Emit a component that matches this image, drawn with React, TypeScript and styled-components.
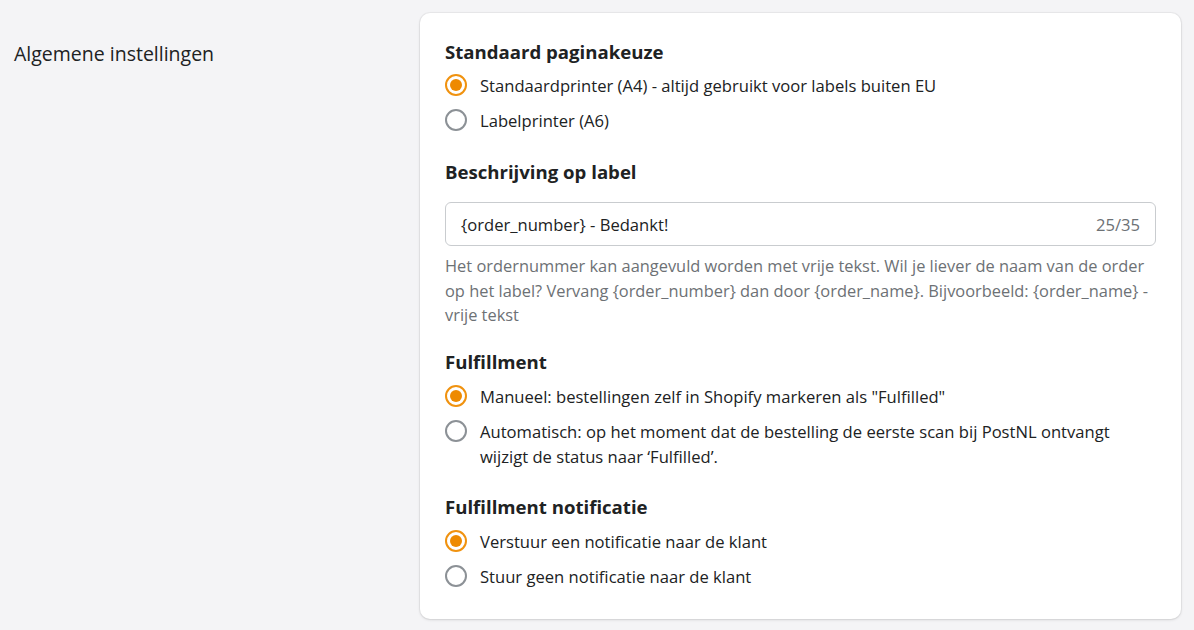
import React from "react";
import styled, { createGlobalStyle } from "styled-components";

const Global = createGlobalStyle`
  html, body { margin: 0; padding: 0; background: #f4f4f6; }
  body { font-family: "Open Sans", "Noto Sans", sans-serif; color: #202223; }
  * { box-sizing: border-box; }
`;

const Page = styled.div`
  display: flex;
  align-items: flex-start;
  padding: 13px 13px 12px 14px;
  min-height: 630px;
`;

const SideLabel = styled.div`
  width: 406px;
  flex: none;
  padding-top: 28px;
  font-size: 19.5px;
  line-height: 26px;
  color: #202223;
`;

const Card = styled.div`
  width: 761px;
  background: #fff;
  border-radius: 10px;
  box-shadow: 0 0 0 1px rgba(0, 0, 0, 0.04), 0 1px 3px rgba(0, 0, 0, 0.12);
  padding: 27px 25px 30px 25px;
  display: flex;
  flex-direction: column;
`;

const Section = styled.div<{ $gap?: number }>`
  display: flex;
  flex-direction: column;
  margin-top: ${(p) => p.$gap ?? 0}px;
`;

const Heading = styled.div<{ $mb?: number }>`
  font-size: 18.6px;
  font-weight: 700;
  line-height: 24px;
  margin-bottom: ${(p) => p.$mb ?? 10}px;
`;

const RadioList = styled.div`
  display: flex;
  flex-direction: column;
  gap: 10px;
`;

const RadioRow = styled.label`
  display: flex;
  align-items: flex-start;
  gap: 13px;
  font-size: 16.6px;
  line-height: 25px;
  color: #202223;
  cursor: pointer;
`;

const Circle = styled.span<{ $checked: boolean }>`
  flex: none;
  width: 22px;
  height: 22px;
  margin-top: 1px;
  border-radius: 50%;
  border: 2px solid ${(p) => (p.$checked ? "#f0920f" : "#8c9196")};
  display: flex;
  align-items: center;
  justify-content: center;
  &::after {
    content: "";
    width: 12px;
    height: 12px;
    border-radius: 50%;
    background: ${(p) => (p.$checked ? "#ee8a00" : "transparent")};
  }
`;

const InputBox = styled.div`
  display: flex;
  align-items: center;
  justify-content: space-between;
  height: 44px;
  border: 1px solid #c9cccf;
  border-radius: 6px;
  padding: 0 15px;
  font-size: 16.6px;
  color: #202223;
`;

const Counter = styled.span`
  color: #6d7175;
`;

const Help = styled.p`
  margin: 8px 0 0;
  font-size: 16.4px;
  line-height: 24.5px;
  color: #6d7175;
`;

const helpText =
  "Het ordernummer kan aangevuld worden met vrije tekst. Wil je liever de naam van de order op het label? Vervang {order_number} dan door {order_name}. Bijvoorbeeld: {order_name}\u00a0- vrije tekst";

type Opt = { label: React.ReactNode; checked: boolean };

const Radios = ({ options }: { options: Opt[] }) => (
  <RadioList>
    {options.map((o, i) => (
      <RadioRow key={i}>
        <Circle $checked={o.checked} />
        <span>{o.label}</span>
      </RadioRow>
    ))}
  </RadioList>
);

export default function App() {
  return (
    <>
      <Global />
      <Page>
        <SideLabel>Algemene instellingen</SideLabel>
        <Card>
          <Section>
            <Heading $mb={9}>Standaard paginakeuze</Heading>
            <Radios
              options={[
                { label: "Standaardprinter (A4) - altijd gebruikt voor labels buiten EU", checked: true },
                { label: "Labelprinter (A6)", checked: false },
              ]}
            />
          </Section>
          <Section $gap={27}>
            <Heading $mb={18}>Beschrijving op label</Heading>
            <InputBox>
              <span>{"{order_number} - Bedankt!"}</span>
              <Counter>25/35</Counter>
            </InputBox>
            <Help>{helpText}</Help>
          </Section>
          <Section $gap={22}>
            <Heading>Fulfillment</Heading>
            <Radios
              options={[
                { label: 'Manueel: bestellingen zelf in Shopify markeren als "Fulfilled"', checked: true },
                {
                  label:
                    "Automatisch: op het moment dat de bestelling de eerste scan bij PostNL ontvangt wijzigt de status naar \u2018Fulfilled\u2019.",
                  checked: false,
                },
              ]}
            />
          </Section>
          <Section $gap={26}>
            <Heading>Fulfillment notificatie</Heading>
            <Radios
              options={[
                { label: "Verstuur een notificatie naar de klant", checked: true },
                { label: "Stuur geen notificatie naar de klant", checked: false },
              ]}
            />
          </Section>
        </Card>
      </Page>
    </>
  );
}
